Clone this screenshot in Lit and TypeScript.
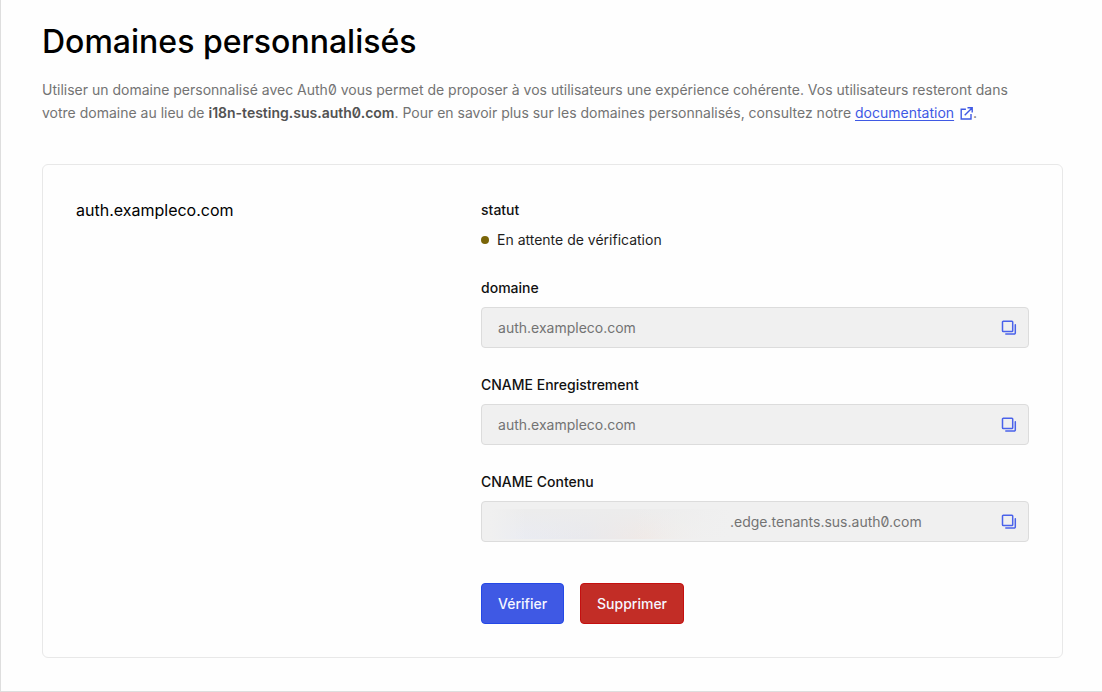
import { LitElement, html, css, nothing } from "lit";
import { customElement, property } from "lit/decorators.js";

@customElement("copy-field")
class CopyField extends LitElement {
  @property() label = "";
  @property() value = "";
  @property({ type: Boolean }) masked = false;

  static styles = css`
    :host {
      display: block;
    }
    .label {
      display: block;
      margin-bottom: 8px;
      line-height: 23px;
      font-weight: 500;
      color: #111;
    }
    .box {
      display: flex;
      align-items: center;
      box-sizing: border-box;
      height: 41px;
      padding: 0 11px 0 16px;
      border: 1px solid #dcdcdc;
      border-radius: 4px;
      background: #f0f0f0;
    }
    .mask {
      flex: none;
      width: 240px;
      height: 30px;
      margin: 4px 0 0 -8px;
      background:
        linear-gradient(90deg, #f0f0f0, transparent 15%, transparent 60%, #f0f0f0),
        linear-gradient(180deg, #ececec, transparent),
        linear-gradient(90deg, #eaecf3 10%, #e9e9ed 40%, #f0e9e6 65%, #f0eeed 85%, #f0f0f0);
    }
    .value {
      flex: 1;
      min-width: 0;
      padding: 0;
      border: 0;
      outline: 0;
      background: none;
      font: inherit;
      font-feature-settings: inherit;
      color: #737373;
    }
    .copy {
      display: flex;
      padding: 0;
      border: 0;
      background: none;
      color: #4a62ea;
      cursor: pointer;
    }
  `;

  copy() {
    navigator.clipboard?.writeText(this.value);
  }

  render() {
    return html`
      <label class="label" for="value">${this.label}</label>
      <div class="box">
        ${this.masked ? html`<span class="mask"></span>` : nothing}
        <input class="value" id="value" readonly .value=${this.value} />
        <button class="copy" type="button" aria-label="Copier" @click=${this.copy}>
          <svg width="16" height="16" viewBox="0 0 16 16" fill="none" stroke="currentColor" stroke-width="1.5" stroke-linecap="round" stroke-linejoin="round">
            <rect x="1.5" y="1.3" width="10.2" height="10.2" rx="0.8" />
            <path d="M14.3 4.8v8.1a1.2 1.2 0 0 1-1.2 1.2H4.8" />
          </svg>
        </button>
      </div>
    `;
  }
}

@customElement("app-root")
class AppRoot extends LitElement {
  static styles = css`
    :host {
      display: block;
      box-sizing: border-box;
      min-height: 100vh;
      padding: 22px 39px 33px 41px;
      border-left: 1px solid #dedede;
      border-bottom: 1px solid #dedede;
      background: #fefefe;
      font-family: Inter, "Liberation Sans", sans-serif;
      font-size: 14px;
      font-feature-settings: "zero";
      color: #1e1e1e;
    }
    .title {
      margin: 0 0 16px;
      font-size: 32px;
      line-height: 40px;
      font-weight: 500;
      font-optical-sizing: none;
      color: #000;
    }
    .intro {
      max-width: 990px;
      margin: 0 0 40px;
      line-height: 23px;
      color: #737373;
    }
    .intro strong {
      font-weight: 600;
      color: #525252;
    }
    .link {
      color: #3f59e4;
      text-underline-offset: 2px;
    }
    .external {
      margin-left: 2px;
      vertical-align: -2px;
      color: #3f59e4;
    }
    .card {
      display: grid;
      grid-template-columns: 17fr 23fr;
      padding: 33px;
      border: 1px solid #e8e8e8;
      border-radius: 6px;
    }
    .name {
      margin: 0;
      font-size: 16px;
      line-height: 24px;
      font-weight: 400;
      color: #000;
    }
    .details {
      display: flex;
      flex-direction: column;
      gap: 25px;
    }
    .heading {
      margin: 0 0 8px;
      font-size: 14px;
      line-height: 23px;
      font-weight: 500;
      color: #111;
    }
    .status {
      display: flex;
      align-items: center;
      gap: 8px;
      margin: 0;
      line-height: 22px;
    }
    .dot {
      width: 8px;
      height: 8px;
      border-radius: 50%;
      background: #7a6508;
    }
    .actions {
      display: flex;
      gap: 16px;
      margin-top: 16px;
    }
    .button {
      height: 41px;
      padding: 0 16px;
      border: 1px solid #2448e6;
      border-radius: 4px;
      background: #3f59e4;
      font: inherit;
      font-weight: 500;
      color: #f5f6ff;
      cursor: pointer;
    }
    .danger {
      border-color: #c50f0f;
      background: #c22d26;
    }
  `;

  render() {
    return html`
      <h1 class="title">Domaines personnalisés</h1>
      <p class="intro">
        Utiliser un domaine personnalisé avec Auth0 vous permet de proposer à vos utilisateurs une
        expérience cohérente. Vos utilisateurs resteront dans votre domaine au lieu de
        <strong>i18n-testing.sus.auth0.com</strong>. Pour en savoir plus sur les domaines
        personnalisés, consultez notre <a class="link" href="#documentation">documentation</a>
        <svg class="external" width="13" height="13" viewBox="0 0 13 13" fill="none" stroke="currentColor" stroke-width="1.4" stroke-linecap="square">
          <path d="M5.2 2.2H1.2v9.8h9.8V7.6M8.2 0.8h4v4M11.8 1.2L5.2 7.8" />
        </svg>.
      </p>
      <section class="card">
        <h2 class="name">auth.exampleco.com</h2>
        <div class="details">
          <div>
            <h3 class="heading">statut</h3>
            <p class="status"><span class="dot"></span>En attente de vérification</p>
          </div>
          <copy-field label="domaine" value="auth.exampleco.com"></copy-field>
          <copy-field label="CNAME Enregistrement" value="auth.exampleco.com"></copy-field>
          <copy-field label="CNAME Contenu" value=".edge.tenants.sus.auth0.com" masked></copy-field>
          <div class="actions">
            <button class="button" type="button">Vérifier</button>
            <button class="button danger" type="button">Supprimer</button>
          </div>
        </div>
      </section>
    `;
  }
}
